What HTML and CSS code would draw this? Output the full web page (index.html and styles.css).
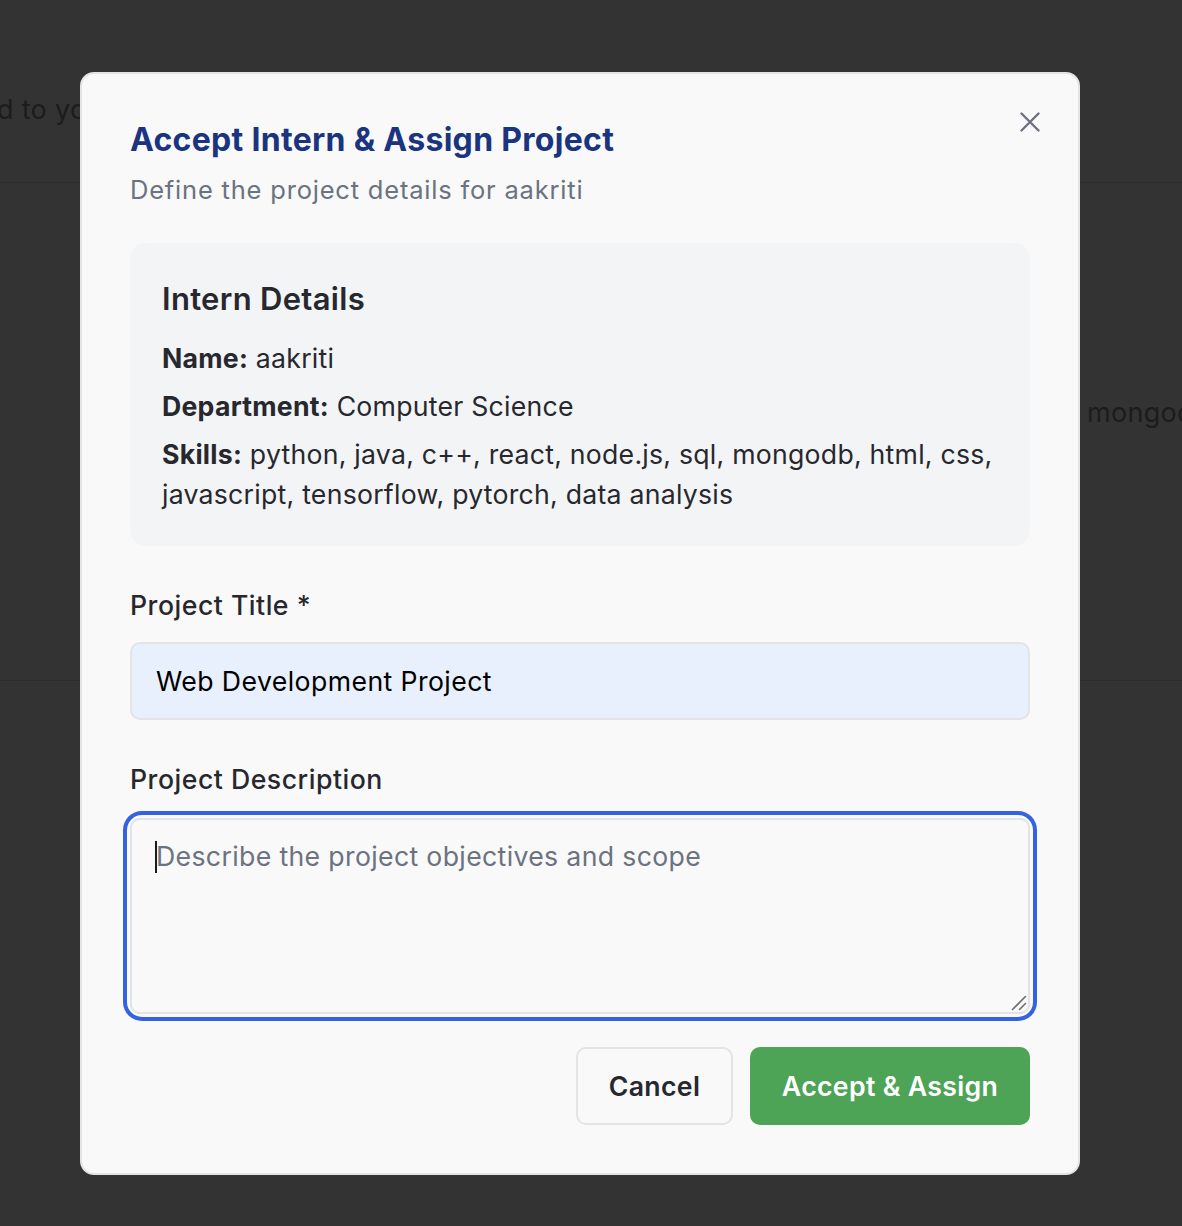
FILE: index.html
```html
<!DOCTYPE html>
<html lang="en">
<head>
<meta charset="utf-8">
<title>Accept Intern &amp; Assign Project</title>
<link rel="stylesheet" href="styles.css">
</head>
<body>
<div class="page">
  <header class="page-head">
    <p class="page-head-text">d to your projects</p>
  </header>
  <section class="page-card">
    <p class="page-card-text">mongodb, html, css</p>
  </section>
</div>

<div class="overlay">
  <div class="modal" role="dialog" aria-labelledby="modal-title">
    <button class="close" type="button" aria-label="Close">
      <svg width="20" height="20" viewBox="0 0 20 20" aria-hidden="true">
        <path d="M1.5 1.5L18.5 18.5M18.5 1.5L1.5 18.5" fill="none" stroke="#6b7280" stroke-width="2.4" stroke-linecap="round"/>
      </svg>
    </button>
    <h2 class="title" id="modal-title">Accept Intern &amp; Assign Project</h2>
    <p class="subtitle">Define the project details for aakriti</p>

    <div class="details">
      <h3 class="details-title">Intern Details</h3>
      <p class="detail"><strong>Name:</strong> aakriti</p>
      <p class="detail"><strong>Department:</strong> Computer Science</p>
      <p class="detail"><strong>Skills:</strong> python, java, c++, react, node.js, sql, mongodb, html, css, javascript, tensorflow, pytorch, data analysis</p>
    </div>

    <div class="field">
      <label class="label" for="ptitle">Project Title *</label>
      <input class="input" id="ptitle" type="text" value="Web Development Project">
    </div>

    <div class="field">
      <label class="label" for="pdesc">Project Description</label>
      <div class="ring">
        <textarea class="textarea" id="pdesc" placeholder="Describe the project objectives and scope"></textarea>
        <span class="caret" aria-hidden="true"></span>
        <svg class="grip" width="16" height="16" viewBox="0 0 16 16" aria-hidden="true">
          <path d="M1.5 14.5L14.5 1.5M8.5 14.5L14.5 8.5" fill="none" stroke="#6e6e72" stroke-width="1.6" stroke-linecap="round"/>
        </svg>
      </div>
    </div>

    <div class="actions">
      <button class="btn btn-cancel" type="button">Cancel</button>
      <button class="btn btn-accept" type="button">Accept &amp; Assign</button>
    </div>
  </div>
</div>
</body>
</html>
```

FILE: styles.css
```css
* { box-sizing: border-box; }

html, body {
  margin: 0;
  padding: 0;
}

body {
  background: #333333;
  font-family: Inter, "Noto Sans", "Liberation Sans", sans-serif;
  color: #1d1d1f;
  height: 1226px;
  overflow: hidden;
}

/* dimmed page behind the modal */
.page {
  width: 100%;
}

.page-head {
  height: 183px;
  border-bottom: 1px solid #2c2c2c;
  padding-top: 90px;
}

.page-head-text {
  margin: 0 0 0 -3px;
  font-size: 27px;
  line-height: 40px;
  letter-spacing: 0.3px;
  color: #1c1c1c;
  white-space: nowrap;
}

.page-card {
  height: 498px;
  border-bottom: 1px solid #2c2c2c;
  padding-top: 210px;
  padding-left: 1087px;
  overflow: hidden;
}

.page-card-text {
  margin: 0;
  font-size: 27px;
  line-height: 40px;
  letter-spacing: 0.3px;
  color: #1c1c1c;
  white-space: nowrap;
}

/* modal */
.overlay {
  position: fixed;
  inset: 0;
  padding: 72px 0 0 80px;
}

.modal {
  position: relative;
  width: 1000px;
  background: #f9f9f9;
  border: 2px solid #e3e3e8;
  border-radius: 14px;
  padding: 48px;
}

.close {
  position: absolute;
  top: 38px;
  right: 38px;
  width: 20px;
  height: 20px;
  padding: 0;
  border: 0;
  background: none;
  display: flex;
}

.title {
  margin: 0;
  font-size: 32px;
  line-height: 36px;
  font-weight: 700;
  letter-spacing: 0.3px;
  color: #1a3480;
}

.subtitle {
  margin: 16px 0 0;
  font-size: 25.5px;
  line-height: 32px;
  letter-spacing: 0.8px;
  color: #6b7280;
}

.details {
  margin-top: 37px;
  background: #f3f4f6;
  border-radius: 16px;
  padding: 32px;
}

.details-title {
  margin: 0 0 15px;
  font-size: 31px;
  line-height: 48px;
  font-weight: 600;
  letter-spacing: 0.3px;
  color: #27282e;
}

.detail {
  margin: 8px 0 0;
  font-size: 26.67px;
  line-height: 40px;
  letter-spacing: 0.24px;
  color: #27282e;
}

.detail strong {
  font-weight: 700;
}

.field {
  margin-top: 39px;
}

.label {
  display: block;
  font-size: 26.67px;
  line-height: 40px;
  font-weight: 500;
  letter-spacing: 0.5px;
  color: #27282e;
  margin-bottom: 17px;
}

.input {
  display: block;
  width: 100%;
  height: 78px;
  padding: 0 24px;
  font-family: inherit;
  font-size: 26.67px;
  letter-spacing: 0.4px;
  color: #000;
  background: #e8f0fe;
  border: 2px solid #e3e4e8;
  border-radius: 10px;
  outline: none;
}

.ring {
  position: relative;
  margin-top: 19px;
  border-radius: 12px;
  box-shadow: 0 0 0 3px #f9f9f9, 0 0 0 7px #3462e3;
}

.textarea {
  display: block;
  width: 100%;
  height: 196px;
  padding: 16px 24px;
  font-family: inherit;
  font-size: 26.67px;
  line-height: 40px;
  letter-spacing: 0.34px;
  color: #000;
  background: #f9f9f9;
  border: 2px solid #e3e4e8;
  border-radius: 10px;
  outline: none;
  resize: none;
}

.textarea::placeholder {
  color: #6b7280;
}

.caret {
  position: absolute;
  left: 25px;
  top: 23px;
  width: 2px;
  height: 32px;
  background: #1b1b1f;
}

.grip {
  position: absolute;
  right: 3px;
  bottom: 3px;
}

.actions {
  margin-top: 33px;
  display: flex;
  justify-content: flex-end;
  gap: 17px;
}

.btn {
  height: 78px;
  padding: 0 30px;
  font-family: inherit;
  font-size: 26.67px;
  line-height: 40px;
  font-weight: 600;
  letter-spacing: 0.33px;
  white-space: nowrap;
  border-radius: 10px;
  border: 2px solid transparent;
}

.btn-cancel {
  width: 157px;
  background: #f9f9f9;
  border-color: #e3e4e8;
  color: #27282e;
}

.btn-accept {
  width: 280px;
  padding: 0;
  background: #4da456;
  color: #ffffff;
}
```
